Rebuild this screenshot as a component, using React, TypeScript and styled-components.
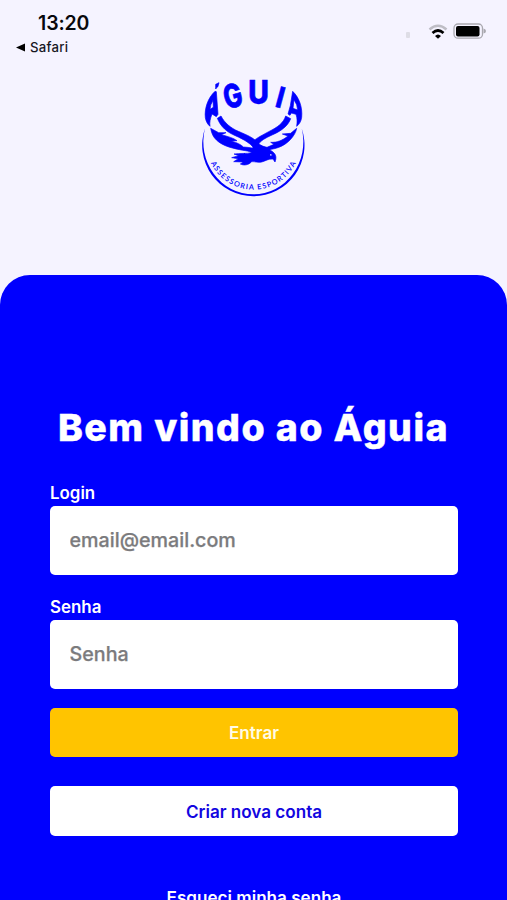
import React from "react";
import styled, { createGlobalStyle } from "styled-components";

const BLUE = "#0000fe";
const PAPER = "#f5f3ff";

const GlobalStyle = createGlobalStyle`
  * { box-sizing: border-box; }
  body { margin: 0; background: ${PAPER}; font-family: Inter, "Liberation Sans", sans-serif; }
`;

const Screen = styled.main`
  width: 100%;
  height: 900px;
  overflow: hidden;
  display: flex;
  flex-direction: column;
  background: ${PAPER};
`;

const StatusBar = styled.header`
  height: 65px;
  flex: none;
  display: flex;
  justify-content: space-between;
  padding: 11px 20px 0 15px;
`;

const Clock = styled.div`
  padding-left: 23px;
  font-size: 19.5px;
  line-height: 24px;
  font-weight: 600;
  letter-spacing: -0.1px;
  color: #08080c;
`;

const BackLink = styled.div`
  display: flex;
  align-items: center;
  gap: 4px;
  margin-top: 4px;
  font-size: 13.2px;
  line-height: 17px;
  font-weight: 500;
  letter-spacing: 0.25px;
  color: #17171f;
`;

const Indicators = styled.div`
  display: flex;
  align-items: center;
  height: 42px;
`;

const Brand = styled.div`
  height: 209.5px;
  flex: none;
  display: flex;
  justify-content: center;
  align-items: flex-start;
  padding-left: 3px;
`;

const Panel = styled.section`
  flex: 1;
  display: flex;
  flex-direction: column;
  padding: 130.5px 49px 0 50px;
  background: ${BLUE};
  border-radius: 30px 30px 0 0;
`;

const Title = styled.h1`
  margin: 0 -10px 31.5px;
  text-align: center;
  white-space: nowrap;
  font-size: 37.5px;
  line-height: 46px;
  font-weight: 800;
  letter-spacing: 1.45px;
  text-indent: -1px;
  color: #fff;
  -webkit-text-stroke: 0.4px #fff;
`;

const Field = styled.label`
  display: block;
  height: 114px;
  color: #fff;
  font-size: 16.9px;
  line-height: 20px;
  font-weight: 600;
`;

const Input = styled.input`
  display: block;
  width: 100%;
  height: 69px;
  margin-top: 3px;
  padding: 0 19.5px;
  border: 0;
  border-radius: 5px;
  background: #fff;
  font: 500 19.7px Inter, sans-serif;
  outline: none;
  &::placeholder { color: #7b7b7d; opacity: 1; -webkit-text-stroke: 0.25px #7b7b7d; }
`;

const Button = styled.button<{ $primary?: boolean }>`
  height: ${(p) => (p.$primary ? 49 : 50)}px;
  margin: ${(p) => (p.$primary ? "-2.5px 0 29px" : "0 0 51px")};
  flex: none;
  padding: 0;
  border: 0;
  border-radius: 5px;
  background: ${(p) => (p.$primary ? "#ffc400" : "#fff")};
  color: ${(p) => (p.$primary ? "#fffbe6" : "#1206e0")};
  font: 600 17.1px Inter, sans-serif;
`;

const Forgot = styled.a`
  text-align: center;
  font-size: 17.1px;
  line-height: 22px;
  font-weight: 600;
  color: #fff;
`;

const LogoLetter = styled.text`
  font: 800 100px Inter, sans-serif;
  text-anchor: middle;
  stroke: ${BLUE};
  stroke-width: 2px;
`;

const LogoCaption = styled.text`
  font: 600 22px Lato, sans-serif;
`;

function EagleLogo() {
  return (
    <svg width="130" height="140" viewBox="0 0 390 420" fill={BLUE} role="img" aria-label="Águia Assessoria Esportiva">
      <path d="M45 190A153.500 153.500 0 1 0 335 190A150 157.600 0 1 1 45 190Z" />
      <LogoLetter transform="translate(137 126) rotate(-15) scale(.74 .98)">G</LogoLetter>
      <LogoLetter transform="translate(206 116) scale(.85 .98)">U</LogoLetter>
      <LogoLetter transform="translate(263 127) rotate(15) scale(.76 .87)">I</LogoLetter>
      <g stroke={BLUE} strokeWidth="2" strokeLinejoin="round">
        <path d="M77 58L87 53L84 64L77 72Z" />
        <path fillRule="evenodd" d="M75 79C53 99 43 132 46 158C48 170 53 178 60 184C58 172 61 160 66 147L79 155L84 148L79 80ZM69 106L70 127L60 133Q61 119 69 106Z" />
        <path fillRule="evenodd" d="M308 79C328 98 338 128 335 157C333 170 328 178 320 184C322 171 322 159 318 148L304 144L300 151L294 147L301 122ZM312 104L309 130L323 135Q322 118 312 104Z" />
        <path d="M82 160L93 153C104 174 122 189 145 199C171 210 190 218 201 231C213 243 227 249 241 254L220 268L197 258C188 238 163 224 136 212C112 202 92 186 82 160Z" />
        <path d="M287 153L302 161C294 184 270 200 246 210C226 219 211 228 205 238L191 227C202 218 216 211 236 200C264 186 280 174 287 153Z" />
        <path d="M62 190L86 203L108 203L94 209C114 215 129 218 141 227L124 228C142 234 152 238 160 246C174 247 188 248 198 253L191 264C171 256 161 257 149 254C119 248 90 240 73 218C67 210 64 201 62 190Z" />
        <path d="M320 190L302 205L277 207L294 213C278 226 261 233 242 232L252 238L231 247L212 242L222 255C253 254 280 246 301 224C312 212 318 201 320 190Z" />
        <path d="M191 240C206 252 235 247 250 262C258 269 260 278 255 291L249 282C235 281 226 288 215 291C205 294 194 289 185 290C175 301 161 302 151 297L160 291L131 290L145 281L125 278L146 272L132 267C151 264 169 267 184 263Z" />
      </g>
      <path d="M240 267L247 270L241 272Z" fill={PAPER} />
      <path id="captionArc" d="M62 293A141.600 141.600 0 0 0 318 293" fill="none" />
      <LogoCaption>
        <textPath href="#captionArc" startOffset="1" textLength="317">ASSESSORIA ESPORTIVA</textPath>
      </LogoCaption>
    </svg>
  );
}

function StatusIcons() {
  return (
    <svg width="84" height="24" viewBox="0 0 84 24" aria-hidden="true">
      <rect x="3" y="12" width="4" height="6" rx="1" fill="#dedde6" />
      <path d="M26.500 9.500Q35 1.800 43.500 9.500" fill="none" stroke="#bebdc5" strokeWidth="2.400" />
      <path d="M29.500 13Q35 8 40.500 13" fill="none" stroke="#000" strokeWidth="2.700" />
      <path d="M32 16Q35 13 38 16L35 18.800Z" fill="#000" />
      <rect x="51" y="4" width="28.500" height="14.200" rx="4" fill="none" stroke="#a9a8af" strokeWidth="1.300" />
      <rect x="53" y="6" width="23.500" height="10.500" rx="2" fill="#000" />
      <path d="M80.500 8.500Q83 9 83 11T80.500 13.500Z" fill="#a9a8af" />
    </svg>
  );
}

export default function App() {
  return (
    <Screen>
      <GlobalStyle />
      <StatusBar>
        <div>
          <Clock>13:20</Clock>
          <BackLink>
            <svg width="11" height="9" viewBox="0 0 11 9" aria-hidden="true"><path d="M1 4.500L10 0.500V8.500Z" /></svg>
            Safari
          </BackLink>
        </div>
        <Indicators><StatusIcons /></Indicators>
      </StatusBar>
      <Brand><EagleLogo /></Brand>
      <Panel>
        <Title>Bem vindo ao Águia</Title>
        <Field>Login<Input placeholder="email@email.com" /></Field>
        <Field>Senha<Input type="password" placeholder="Senha" /></Field>
        <Button $primary>Entrar</Button>
        <Button>Criar nova conta</Button>
        <Forgot>Esqueci minha senha</Forgot>
      </Panel>
    </Screen>
  );
}
